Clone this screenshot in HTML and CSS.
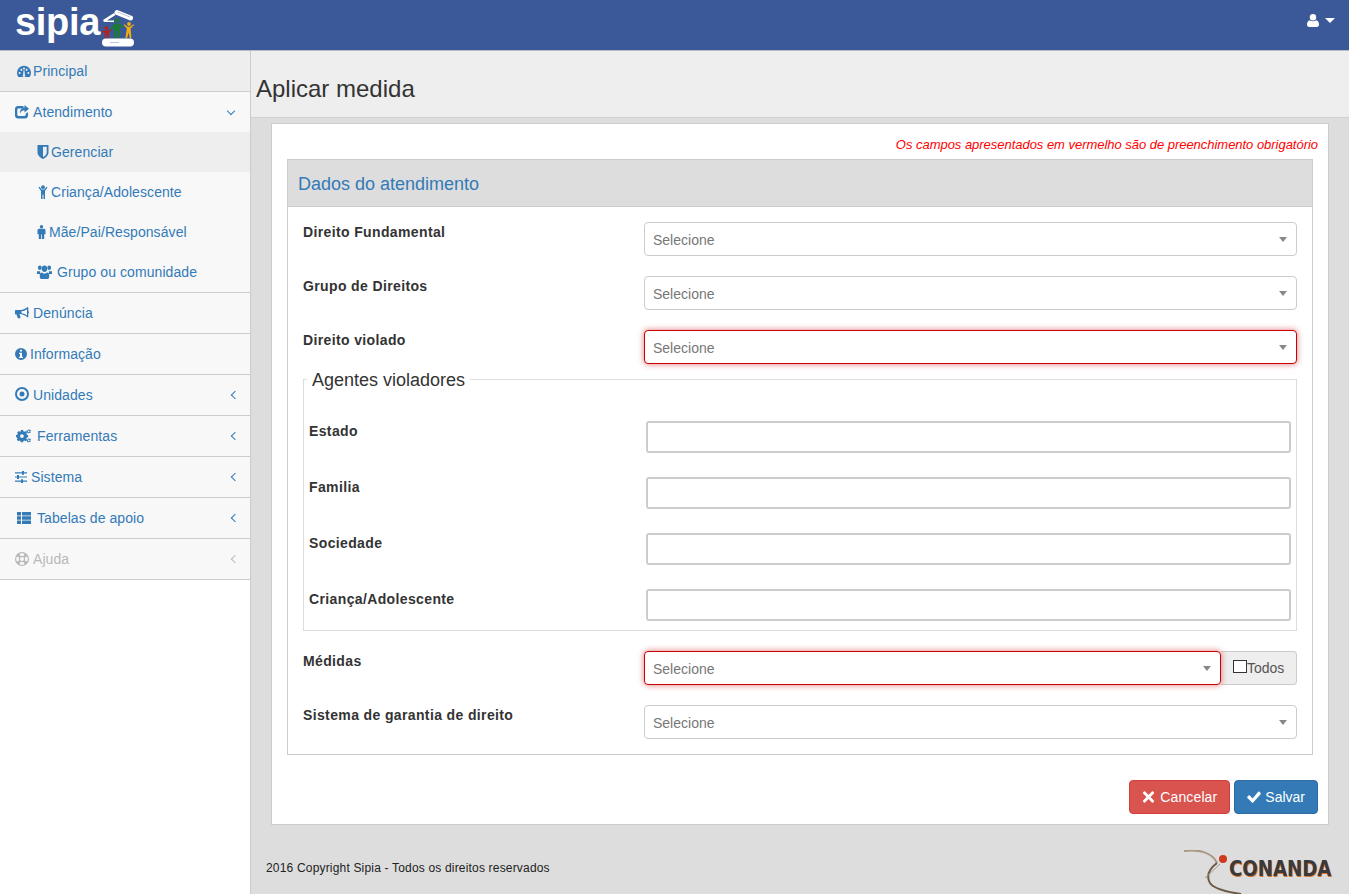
FILE: index.html
```html
<!DOCTYPE html>
<html lang="pt-BR">
<head>
<meta charset="utf-8">
<title>Sipia - Aplicar medida</title>
<link rel="stylesheet" href="styles.css">
</head>
<body>
<svg class="sprite" aria-hidden="true">
  <symbol id="i-dash" viewBox="0 0 16 14"><path fill-rule="evenodd" d="M8 1a8 8 0 0 0-8 8c0 1.800.6 3.400 1.600 4.800h12.800A8 8 0 0 0 16 9a8 8 0 0 0-8-8zM3 8a1.200 1.200 0 1 1 0 2.400A1.200 1.200 0 0 1 3 8zm2-3.500a1.200 1.200 0 1 1 0 2.400 1.200 1.200 0 0 1 0-2.400zM8 3a1.200 1.200 0 1 1 0 2.400A1.200 1.200 0 0 1 8 3zm3 1.500a1.200 1.200 0 1 1 0 2.400 1.200 1.200 0 0 1 0-2.400zM13 8a1.200 1.200 0 1 1 0 2.400A1.200 1.200 0 0 1 13 8zM7.400 6.500h1.200l.4 4.700a1.500 1.500 0 1 1-2 0z"/></symbol>
  <symbol id="i-share" viewBox="0 0 14 14"><path d="M3 1h5.500v2.500H3.500c-.7 0-1.200.5-1.200 1.200v5.100c0 .7.5 1.200 1.200 1.200h6c.7 0 1.200-.5 1.200-1.200V8.700L13 6.900v3.600c0 1.700-1.300 3-3 3H3c-1.700 0-3-1.300-3-3V4c0-1.700 1.300-3 3-3z"/><path d="M9.500 0L14 3.800 9.500 7.600V5.300C7.500 5.300 6 6 5 8.800c-.3-3.600 1.500-5.800 4.500-6.200z"/></symbol>
  <symbol id="i-shield" viewBox="0 0 12 14"><path fill-rule="evenodd" d="M.5 0h11v7.500c0 3-3 5.300-5.500 6.500C3.500 12.800.5 10.500.5 7.500zM6 1.800v10.300c1.800-1 3.700-2.700 3.700-4.600V1.800z"/></symbol>
  <symbol id="i-child" viewBox="0 0 12 14"><circle cx="6" cy="2.200" r="1.900"/><path d="M1.500 2.500l1-.8 2 2.800h3l2-2.800 1 .8-2.500 3.500V14H6.500V9.500h-1V14H4V6z"/></symbol>
  <symbol id="i-male" viewBox="0 0 8 14"><circle cx="4" cy="1.700" r="1.700"/><path d="M1.500 3.800h5c.8 0 1.500.7 1.500 1.500v4H6.700V14H4.400V9.500h-.8V14H1.300V9.300H0v-4c0-.8.7-1.500 1.500-1.500z"/></symbol>
  <symbol id="i-users" viewBox="0 0 15 12" preserveAspectRatio="none"><circle cx="2.800" cy="2.300" r="1.900"/><circle cx="12.200" cy="2.300" r="1.900"/><circle cx="7.500" cy="3.200" r="2.700"/><path d="M0 5.300h3.300C2.800 6 3 7 3.500 7.800H0zM11.700 5.300H15v2.500h-3.500c.5-.8.700-1.800.2-2.500z"/><path d="M4.800 6.500c1.500 1.200 3.900 1.200 5.400 0 1.300 0 2 1 2 2.300V10c0 1.100-.8 2-2 2H4.800c-1.200 0-2-.9-2-2V8.800c0-1.300.7-2.300 2-2.300z"/></symbol>
  <symbol id="i-horn" viewBox="0 0 14 12"><path fill-rule="evenodd" d="M12.500 0c.5 0 .8.300.8.800v3.300c.4.200.7.600.7 1.100s-.3.900-.7 1.100v3.300c0 .5-.3.800-.8.800-2-1.700-4.500-3-7-3.300h-1l1 3.500c.1.400-.1.600-.4.700H3.300c-.3 0-.5-.2-.6-.4L1.600 7.400H1C.4 7.400 0 7 0 6.400V4c0-.6.400-1 1-1h4.500c2.500-.2 5-1.300 7-3zm-.5 2.200c-1.500 1.100-3.700 1.900-5.500 2.100v2c1.800.2 4 1 5.500 2.100z"/></symbol>
  <symbol id="i-info" viewBox="0 0 12 12"><path fill-rule="evenodd" d="M6 0a6 6 0 1 1 0 12A6 6 0 0 1 6 0zM5 1.800v1.800h2V1.800zM4 4.800v1.200h1v2.700H4v1.300h4V8.700H7V4.800z"/></symbol>
  <symbol id="i-dot" viewBox="0 0 14 14"><path fill-rule="evenodd" d="M7 0a7 7 0 1 1 0 14A7 7 0 0 1 7 0zm0 2a5 5 0 1 0 0 10A5 5 0 0 0 7 2z"/><circle cx="7" cy="7" r="2.500"/></symbol>
  <symbol id="i-cogs" viewBox="0 0 16 14"><path fill-rule="evenodd" d="M4 2.700h2.400l.3 1.300 1.100.5 1.200-.7 1.600 1.600-.7 1.200.5 1.100 1.300.3v2.200L10.400 10.500l-.5 1.100.7 1.200L9 14.400 7.800 13.700l-1.100.5-.3 1.300H4L3.700 14.200 2.600 13.700l-1.200.7L-.2 12.800l.7-1.200L0 10.500-1 10.200V8l1.300-.3.500-1.100-.7-1.200 1.600-1.600 1.200.7 1.100-.5zM5.200 7a2 2 0 1 0 0 4 2 2 0 0 0 0-4z" transform="translate(1 -1.500) scale(.95)"/><path fill-rule="evenodd" d="M13 0l.5 1 1-.2.400 1.100-.8.700.6.900-.8.800-.9-.5-.8.700-1-.4v-1l-1-.5.300-1.100 1.100 0zM12.700 1.600a.8.800 0 1 0 0 1.600.8.800 0 0 0 0-1.600zM13 9l.5 1 1-.2.400 1.100-.8.700.6.900-.8.800-.9-.5-.8.700-1-.4v-1l-1-.5.300-1.100 1.100 0zM12.700 10.600a.8.800 0 1 0 0 1.600.8.800 0 0 0 0-1.600z"/></symbol>
  <symbol id="i-sliders" viewBox="0 0 12 12"><path d="M0 1.300h7V0h2v1.300h3v1.200H9v1.300H7V2.500H0zM0 5.400h2V4.100h2v1.300h8v1.200H4v1.300H2V6.600H0zM0 9.500h6V8.200h2v1.300h4v1.200H8V12H6v-1.300H0z"/></symbol>
  <symbol id="i-table" viewBox="0 0 14 12"><path d="M0 0h4v3.400H0zM5 0h9v3.400H5zM0 4.300h4v3.400H0zM5 4.300h9v3.400H5zM0 8.600h4V12H0zM5 8.600h9V12H5z"/></symbol>
  <symbol id="i-ring" viewBox="0 0 14 14"><path fill-rule="evenodd" d="M7 0a7 7 0 1 1 0 14A7 7 0 0 1 7 0zM4.500 1.800l1 2.400a3.200 3.200 0 0 1 3 0l1-2.400a5.800 5.800 0 0 0-5 0zM1.800 4.500a5.800 5.800 0 0 0 0 5l2.400-1a3.200 3.200 0 0 1 0-3zm10.400 0l-2.400 1a3.200 3.200 0 0 1 0 3l2.400 1a5.800 5.800 0 0 0 0-5zM5.500 9.800l-1 2.400a5.800 5.800 0 0 0 5 0l-1-2.400a3.200 3.200 0 0 1-3 0zM7 5a2 2 0 1 0 0 4 2 2 0 0 0 0-4z"/></symbol>
  <symbol id="i-user" viewBox="0 0 12 13"><circle cx="6" cy="3.200" r="3.200"/><path d="M2.800 6.200c1.800 1.300 4.600 1.300 6.400 0 1.800.3 2.800 2 2.800 4.300 0 1.500-.9 2.500-2.200 2.500H2.200C.9 13 0 12 0 10.500c0-2.300 1-4 2.800-4.300z"/></symbol>
  <symbol id="i-times" viewBox="0 0 12 12"><path d="M2.600.6L6 4l3.400-3.400c.4-.4.800-.4 1.200 0l.8.800c.4.400.4.800 0 1.200L8 6l3.400 3.400c.4.400.4.800 0 1.200l-.8.800c-.4.400-.8.400-1.200 0L6 8l-3.400 3.400c-.4.400-.8.400-1.200 0l-.8-.8c-.4-.4-.4-.8 0-1.200L4 6 .6 2.600c-.4-.4-.4-.8 0-1.200l.8-.8c.4-.4.800-.4 1.200 0z"/></symbol>
  <symbol id="i-check" viewBox="0 0 14 12"><path d="M5 11.600L.4 7c-.4-.4-.4-.8 0-1.200l1.200-1.200c.4-.4.800-.4 1.200 0L5.600 7.400 11.200.8c.4-.4.800-.4 1.200 0l1.200 1.200c.4.400.4.800 0 1.200L6.200 11.600c-.4.400-.8.400-1.200 0z"/></symbol>
</svg>

<header class="topbar">
  <div class="brand">
    <span class="brand-name">sipia</span>
    <svg class="brand-mark" viewBox="0 0 34 38" aria-hidden="true">
      <path class="m-pill" d="M16 3.500l13.500 5.500"/>
      <path class="m-line" d="M16.500 3l12.500 5"/>
      <path class="m-white" d="M2 11L13 4l1.500 2L6 11.500h7v1.500H3z"/>
      <circle class="m-green" cx="16" cy="11.500" r="2.300"/>
      <path class="m-green" d="M13.500 14.800h5l5 2.700-.5 1.200-3.800-1.500V29h-2.400v-7h-1.300v7h-2.400V18.500l-3.500 3-1-1z"/>
      <circle class="m-red" cx="5.500" cy="19" r="1.900"/>
      <path class="m-red" d="M3.800 21.500h3.400l3-1.300.5 1.100-2.700 1.900V29H6.300v-3.500H5.200V29H3.600v-5.800l-2.800.4-.4-1.100z"/>
      <circle class="m-yellow" cx="28" cy="15" r="1.900"/>
      <path class="m-yellow" d="M26.500 17.800l-3.200-2.600-.7.9 3.300 3.400-1.500 9.500h1.700l1.600-5.500 1 5.500h1.700l-.8-9.500 3.400-3.400-.7-.9-3.200 2.600z"/>
      <rect class="m-white" x="1" y="29.500" width="32" height="8" rx="4"/>
      <path class="m-line" d="M9 33.500h9"/>
    </svg>
  </div>
  <button class="user-menu" type="button" aria-label="Usuário">
    <svg class="user-icon"><use href="#i-user"/></svg>
    <span class="caret"></span>
  </button>
</header>

<div class="layout">
  <nav class="sidebar">
    <a class="nav-item is-current"><svg class="ico w14 in2"><use href="#i-dash"/></svg><span class="gap2">Principal</span></a>
    <div class="nav-group">
      <a class="nav-item no-border"><svg class="ico w14"><use href="#i-share"/></svg><span class="gap4">Atendimento</span><span class="chev down"></span></a>
      <a class="nav-sub is-current"><svg class="ico w12"><use href="#i-shield"/></svg><span class="gap2">Gerenciar</span></a>
      <a class="nav-sub"><svg class="ico w12"><use href="#i-child"/></svg><span class="gap2">Criança/Adolescente</span></a>
      <a class="nav-sub"><svg class="ico w8"><use href="#i-male"/></svg><span class="gap3">Mãe/Pai/Responsável</span></a>
      <a class="nav-sub"><svg class="ico w15b"><use href="#i-users"/></svg><span class="gap5">Grupo ou comunidade</span></a>
    </div>
    <a class="nav-item"><svg class="ico w14"><use href="#i-horn"/></svg><span class="gap4">Denúncia</span></a>
    <a class="nav-item"><svg class="ico w12"><use href="#i-info"/></svg><span class="gap3">Informação</span></a>
    <a class="nav-item"><svg class="ico w14 up"><use href="#i-dot"/></svg><span class="gap4">Unidades</span><span class="chev"></span></a>
    <a class="nav-item"><svg class="ico w16 in1"><use href="#i-cogs"/></svg><span class="gap5">Ferramentas</span><span class="chev"></span></a>
    <a class="nav-item"><svg class="ico w12"><use href="#i-sliders"/></svg><span class="gap4">Sistema</span><span class="chev"></span></a>
    <a class="nav-item"><svg class="ico w14 in2"><use href="#i-table"/></svg><span class="gap6">Tabelas de apoio</span><span class="chev"></span></a>
    <a class="nav-item is-muted"><svg class="ico w14"><use href="#i-ring"/></svg><span class="gap4">Ajuda</span><span class="chev"></span></a>
  </nav>

  <main class="main">
    <div class="page-title"><h1>Aplicar medida</h1></div>
    <section class="panel">
      <p class="req-note">Os campos apresentados em vermelho são de preenchimento obrigatório</p>
      <div class="box">
        <h2 class="box-head">Dados do atendimento</h2>
        <div class="box-body">
          <div class="row">
            <label class="lbl">Direito Fundamental</label>
            <div class="sel"><span>Selecione</span><i class="arrow"></i></div>
          </div>
          <div class="row">
            <label class="lbl">Grupo de Direitos</label>
            <div class="sel"><span>Selecione</span><i class="arrow"></i></div>
          </div>
          <div class="row">
            <label class="lbl">Direito violado</label>
            <div class="sel is-req"><span>Selecione</span><i class="arrow"></i></div>
          </div>
          <fieldset class="agents">
            <legend>Agentes violadores</legend>
            <div class="agent-row"><label class="lbl">Estado</label><input class="txt" type="text"></div>
            <div class="agent-row"><label class="lbl">Familia</label><input class="txt" type="text"></div>
            <div class="agent-row"><label class="lbl">Sociedade</label><input class="txt" type="text"></div>
            <div class="agent-row"><label class="lbl">Criança/Adolescente</label><input class="txt" type="text"></div>
          </fieldset>
          <div class="row">
            <label class="lbl">Médidas</label>
            <div class="sel is-req joined"><span>Selecione</span><i class="arrow"></i></div>
            <div class="addon"><span class="box-check"></span>Todos</div>
          </div>
          <div class="row last">
            <label class="lbl">Sistema de garantia de direito</label>
            <div class="sel"><span>Selecione</span><i class="arrow"></i></div>
          </div>
        </div>
      </div>
      <div class="actions">
        <button class="btn btn-red" type="button"><svg class="btn-ico w13"><use href="#i-times"/></svg>Cancelar</button>
        <button class="btn btn-blue" type="button"><svg class="btn-ico w14"><use href="#i-check"/></svg>Salvar</button>
      </div>
    </section>
    <footer class="foot">
      <span>2016 Copyright Sipia - Todos os direitos reservados</span>
      <div class="conanda">
        <svg class="con-mark" viewBox="0 0 62 44" aria-hidden="true">
          <path class="c-tan" d="M0 1c14-2 28 1 33 12"/>
          <path class="c-dark" d="M33 13c-8 6-11 13-7 20 4 6 17 9 31 11"/>
          <path class="c-thin" d="M21 28L36 14"/>
          <circle class="c-ball" cx="39" cy="9" r="4"/>
        </svg>
        <span class="con-name">CONANDA</span>
      </div>
    </footer>
  </main>
</div>
</body>
</html>
```

FILE: styles.css
```css
* { box-sizing: border-box; }
html, body { margin: 0; height: 894px; overflow: hidden; }
body { font: 14px/20px "Liberation Sans", Arial, sans-serif; color: #333; background: #fff; }
.sprite { display: none; }

.topbar { height: 51px; background: #3b5998; border-bottom: 1px solid #b9bcc2; display: flex; justify-content: space-between; align-items: flex-start; }
.brand { display: flex; align-items: flex-start; padding-left: 15px; }
.brand-name { margin-top: 3px; font: 700 38px/38px "Liberation Sans", sans-serif; color: #fff; letter-spacing: -.3px; }
.brand-mark { width: 34px; height: 38px; margin: 9px 0 0 1px; }
.m-white { fill: #fff; }
.m-pill { stroke: #fff; stroke-width: 5; stroke-linecap: round; fill: none; }
.m-line { stroke: #bcc6da; stroke-width: 1; fill: none; }
.m-green { fill: #1d7a36; }
.m-red { fill: #b3211f; }
.m-yellow { fill: #f2ae0c; }
.user-menu { background: none; border: 0; padding: 0; margin: 14px 14px 0 0; display: flex; align-items: center; color: #fff; }
.user-icon { width: 12px; height: 13px; fill: #fff; }
.caret { width: 0; height: 0; margin-left: 6px; border: 5px solid transparent; border-top-color: #fff; border-bottom: 0; }

.layout { display: flex; height: 843px; }
.sidebar { width: 251px; flex: none; background: #fff; border-right: 1px solid #ccc; letter-spacing: .08px; }
.nav-item { height: 41px; display: flex; align-items: center; padding: 0 15px; background: #f8f8f8; border-bottom: 1px solid #ccc; color: #337ab7; }
.nav-item.no-border { border-bottom: 0; height: 40px; }
.nav-group { border-bottom: 1px solid #ccc; background: #f8f8f8; }
.nav-sub { height: 40px; display: flex; align-items: center; padding-left: 37px; color: #337ab7; }
.is-current { background: #eee; }
.nav-item.is-current { background: #eee; }
.nav-item.is-muted { color: #b9b9b9; }
.is-muted .chev { border-color: #b9b9b9; }
.ico { height: 14px; fill: currentColor; flex: none; }
.ico.up { margin-top: -2px; }
.w8 { width: 9px; }
.w12 { width: 12px; }
.w13 { width: 13px; }
.w14 { width: 14px; }
.w15b { width: 15px; }
.w16 { width: 16px; }
.in1 { margin-left: 1px; }
.in2 { margin-left: 2px; }
.gap2 { margin-left: 2px; }
.gap3 { margin-left: 3px; }
.gap4 { margin-left: 4px; }
.gap5 { margin-left: 5px; }
.gap6 { margin-left: 6px; }
.chev { margin-left: auto; margin-right: -3px; width: 6px; height: 6px; border-left: 1.500px solid #337ab7; border-bottom: 1.500px solid #337ab7; transform: rotate(45deg); }
.chev.down { transform: rotate(-45deg); margin-right: 1px; margin-top: -3px; }

.main { flex: 1; min-width: 0; background: #ddd; display: flex; flex-direction: column; }
.page-title { height: 67px; background: #eee; border-bottom: 1px solid #d0d0d0; padding: 25px 0 0 5px; }
.page-title h1 { margin: 0; font-size: 24px; line-height: 26px; font-weight: 400; color: #333; }

.panel { margin: 5px 20px 0 20px; height: 702px; background: #fff; border: 1px solid #ccc; padding: 0 10px 0 15px; }
.req-note { margin: 0; height: 35px; padding-top: 11px; text-align: right; font-size: 13px; line-height: 20px; font-style: italic; color: #f00; letter-spacing: -.03px; }
.box { border: 1px solid #ccc; height: 596px; margin-right: 5px; }
.box-head { margin: 0; height: 47px; padding: 14px 10px 0; background: #ddd; border-bottom: 1px solid #ccc; font-size: 18px; line-height: 20px; font-weight: 400; color: #337ab7; }
.box-body { padding: 15px 15px 0; }
.row { display: flex; align-items: flex-start; margin-bottom: 20px; }
.row.last { margin-bottom: 0; }
.lbl { width: 341px; flex: none; font-weight: 700; letter-spacing: .37px; color: #333; }
.sel { flex: 1; height: 34px; display: flex; align-items: center; justify-content: space-between; padding: 1px 9px 0 8px; background: #fff; border: 1px solid #ccc; border-radius: 4px; color: #777; position: relative; }
.sel.is-req { border-color: #c00; box-shadow: 0 0 6px rgba(204, 0, 0, .55); z-index: 1; }
.arrow { width: 0; height: 0; border: 4px solid transparent; border-top: 5px solid #888; border-bottom: 0; }
.addon { width: 76px; height: 34px; flex: none; background: #eee; border: 1px solid #ccc; border-left: 0; border-radius: 0 4px 4px 0; padding: 6px 0 0 12px; display: flex; color: #555; }
.box-check { width: 14px; height: 13px; margin-top: 2px; background: #fff; border: 1px solid #333; }

.agents { margin: -16px 0 20px; padding: 0 5px; height: 263px; border: 1px solid #ddd; min-width: 0; }
.agents legend { margin: 0 0 0 -2px; padding: 2px 5px 0; font-size: 18px; line-height: 20px; color: #333; }
.agent-row { display: flex; align-items: flex-start; height: 56px; }
.agents .agent-row:first-of-type { margin-top: 31px; }
.agent-row .lbl { width: 337px; }
.txt { flex: 1; min-width: 0; height: 32px; border: 2px solid #ccc; border-radius: 3px; background: #fff; padding: 0 6px; font: inherit; }

.actions { display: flex; justify-content: flex-end; gap: 4px; margin-top: 25px; }
.btn { height: 34px; padding: 0 12px; border: 1px solid; border-radius: 4px; font: inherit; color: #fff; display: flex; align-items: center; }
.btn-red { background: #d9534f; border-color: #d43f3a; letter-spacing: .12px; }
.btn-red .btn-ico { margin-right: 5px; }
.btn-blue { background: #337ab7; border-color: #2e6da4; }
.btn-ico { height: 12px; fill: #fff; margin-right: 4px; }

.foot { flex: 1; display: flex; justify-content: space-between; padding: 33px 16px 0 15px; font-size: 12px; color: #222; letter-spacing: .18px; position: relative; }
.foot > span { line-height: 20px; }
.conanda { position: absolute; right: 15px; top: 25px; width: 150px; height: 45px; }
.con-mark { position: absolute; left: 0; top: 0; width: 62px; height: 44px; fill: none; }
.c-tan { stroke: #a89a82; stroke-width: 2; fill: none; }
.c-dark { stroke: #6d5b48; stroke-width: 2; fill: none; }
.c-thin { stroke: #a89a82; stroke-width: 1; fill: none; }
.c-ball { fill: #d03a1c; }
.con-name { position: absolute; left: 45px; top: 7px; font: 700 22px/24px "DejaVu Sans", sans-serif; color: #3a3a3c; letter-spacing: 0; text-shadow: 1px 1px 0 #d9772a; transform: scaleX(.825); transform-origin: left; }
```
